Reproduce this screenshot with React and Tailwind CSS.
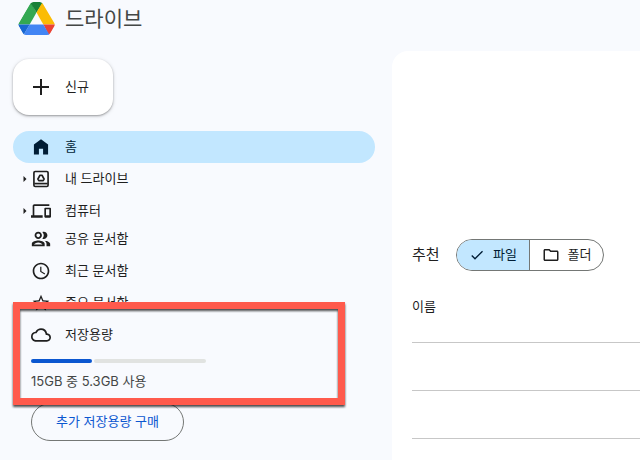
import { useState } from "react";
import {
  MdOutlineDevices,
  MdAccessTime,
  MdStarOutline,
  MdOutlineCloud,
  MdOutlineFolder,
  MdCheck,
} from "react-icons/md";

function DriveLogo() {
  return (
    <svg viewBox="0 0 87.3 78" className="h-[33px] w-[37px] shrink-0" aria-hidden="true">
      <clipPath id="drive-shape">
        <path d="M32 1.5Q34.500 0 37 0H50.500Q53.500 0 56 1.500Q58 3 59.300 5.200L85.900 50.200Q88 53.500 86 57L76.500 73.500Q74 78 69 78H18.500Q13.500 78 11 73.500L1.300 57Q-.6 53.500 1.300 50L28.500 4.800Q30 2.600 32 1.500Z" />
      </clipPath>
      <g clipPath="url(#drive-shape)">
        <path d="M0 53 30 0 43.650 25 27.500 53Z" fill="#34a853" />
        <path d="M28 0H60L43.650 25Z" fill="#188038" />
        <path d="M58 0 90 53H59.800L43.650 25Z" fill="#fbbc04" />
        <path d="M59.800 53H90L73.500 80Z" fill="#ea4335" />
        <path d="M27.500 53H59.800L74.500 78H13Z" fill="#4285f4" />
        <path d="M0 53H27.500L13 78Z" fill="#1967d2" />
      </g>
    </svg>
  );
}

function HomeIcon() {
  return (
    <svg viewBox="0 0 24 24" fill="currentColor" className="size-5" aria-hidden="true">
      <path d="M3.500 21V9L12 2.600 20.500 9V21H14.500V14H9.500V21Z" />
    </svg>
  );
}

function MyDriveIcon() {
  return (
    <svg viewBox="0 0 24 24" fill="none" stroke="currentColor" strokeWidth="2" className="size-5" aria-hidden="true">
      <rect x="3.500" y="3" width="17" height="18" rx="1.500" />
      <path d="M4 17.500H20" />
      <path d="M10.800 7.500H13.200L15.700 12 14.600 14H9.400L8.300 12Z" strokeLinejoin="round" />
    </svg>
  );
}

function PeopleIcon() {
  return (
    <svg viewBox="0 0 24 24" fill="currentColor" className="size-5" aria-hidden="true">
      <path
        d="M9 13.750c-2.340 0-7 1.170-7 3.500V20h14v-2.750c0-2.330-4.660-3.500-7-3.500zM4.340 18c.3-.9 2.600-2.250 4.660-2.250S13.360 17.100 13.660 18H4.340zM9 12c2.210 0 4-1.790 4-4s-1.790-4-4-4-4 1.790-4 4 1.790 4 4 4zm0-6c1.100 0 2 .9 2 2s-.9 2-2 2-2-.9-2-2 .9-2 2-2zm7.040 7.810c1.160.84 1.960 1.960 1.960 3.440V20h4v-2.750c0-2.020-3.500-3.170-5.960-3.440zM15 12c2.210 0 4-1.790 4-4s-1.790-4-4-4c-.54 0-1.040.11-1.500.3.630.89 1.500 2.100 1.500 3.700s-.87 2.810-1.500 3.700c.46.190.96.300 1.500.300z"
        transform="translate(-1.200 -1.200) scale(1.100)"
      />
    </svg>
  );
}

function NavItem({ icon, label, active, expandable }) {
  return (
    <li>
      <a
        href="#"
        aria-current={active ? "page" : undefined}
        className={`flex h-8 items-center rounded-full ${active ? "bg-[#c2e7ff] text-[#001d35]" : "text-[#1f1f1f]"}`}
      >
        <span className="flex w-[18px] shrink-0 justify-end pr-1">
          {expandable && (
            <svg viewBox="0 0 4 6" fill="currentColor" className="h-1.5 w-1" aria-hidden="true">
              <path d="M.5 0 3.500 3 .5 6Z" />
            </svg>
          )}
        </span>
        <span className="mr-3.5 size-5 shrink-0">{icon}</span>
        {label}
      </a>
    </li>
  );
}

function Sidebar() {
  return (
    <aside className="w-[392px] shrink-0 pt-2 pr-[17px] pl-[13px]">
      <button
        type="button"
        className="flex h-14 items-center rounded-2xl bg-white pr-6 pl-[18px] shadow-[0_1px_2px_rgba(0,0,0,0.3),0_1px_4px_rgba(0,0,0,0.15)]"
      >
        <svg viewBox="0 0 20 20" stroke="currentColor" strokeWidth="2" className="mr-3.5 size-5" aria-hidden="true">
          <path d="M2 10H18M10 2V18" />
        </svg>
        신규
      </button>

      <nav className="mt-4 h-[180px] overflow-hidden">
        <ul>
          <NavItem active icon={<HomeIcon />} label="홈" />
          <NavItem expandable icon={<MyDriveIcon />} label="내 드라이브" />
          <NavItem expandable icon={<MdOutlineDevices className="size-5" />} label="컴퓨터" />
        </ul>
        <ul className="-mt-1">
          <NavItem icon={<PeopleIcon />} label="공유 문서함" />
          <NavItem icon={<MdAccessTime className="size-5" />} label="최근 문서함" />
          <NavItem icon={<MdStarOutline className="size-5" />} label="중요 문서함" />
        </ul>
      </nav>

      <section className="relative pt-2 pl-[18px]">
        <div className="absolute -top-[9px] left-0 h-[103px] w-[332px] border-[7px] border-[#ff5a4c] drop-shadow-[0_2px_1px_rgba(0,0,0,0.7)]" />
        <a href="#" className="flex h-8 items-center">
          <MdOutlineCloud className="mr-3.5 size-5" />
          저장용량
        </a>
        <div
          role="progressbar"
          aria-label="저장용량"
          aria-valuemin={0}
          aria-valuemax={15}
          aria-valuenow={5.3}
          className="mt-2 flex h-1 w-[175px] gap-0.5"
        >
          <span className="w-[35%] rounded-full bg-[#0b57d0]" />
          <span className="flex-1 rounded-full bg-[#e1e3e1]" />
        </div>
        <p className="mt-2 leading-5 text-[#444746]">15GB 중 5.3GB 사용</p>
        <button
          type="button"
          className="mt-3 h-[38px] rounded-full border border-[#747775] px-6 text-[#0b57d0]"
        >
          추가 저장용량 구매
        </button>
      </section>
    </aside>
  );
}

function Suggestions() {
  const [view, setView] = useState("file");
  const chip = "flex w-[73px] items-center justify-center gap-2";
  return (
    <main className="min-w-0 flex-1 rounded-tl-2xl bg-white pt-[188px] pl-5">
      <div className="flex h-8 items-center gap-4">
        <h2 className="w-7 text-[15px] whitespace-nowrap">추천</h2>
        <div className="flex h-8 overflow-hidden rounded-full border border-[#747775]">
          <button
            type="button"
            aria-pressed={view === "file"}
            onClick={() => setView("file")}
            className={`${chip} border-r border-[#747775] ${view === "file" ? "bg-[#c2e7ff] text-[#001d35]" : ""}`}
          >
            <MdCheck className="size-4" />
            파일
          </button>
          <button
            type="button"
            aria-pressed={view === "folder"}
            onClick={() => setView("folder")}
            className={`${chip} ${view === "folder" ? "bg-[#c2e7ff] text-[#001d35]" : ""}`}
          >
            <MdOutlineFolder className="size-[18px]" />
            폴더
          </button>
        </div>
      </div>
      <table className="w-full border-collapse">
        <thead>
          <tr className="h-[71px] border-b border-[#c7c7c7]">
            <th scope="col" className="text-left font-normal">이름</th>
          </tr>
        </thead>
        <tbody>
          <tr className="h-12 border-b border-[#c7c7c7]"><td /></tr>
          <tr className="h-12 border-b border-[#c7c7c7]"><td /></tr>
        </tbody>
      </table>
    </main>
  );
}

export default function App() {
  return (
    <div className="flex min-h-screen flex-col bg-[#f8fafe] font-[Inter,'Noto_Sans_CJK_KR',sans-serif] text-[13px] text-[#1f1f1f]">
      <header className="flex h-[51px] items-start gap-2.5 pt-0.5 pl-[18px]">
        <DriveLogo />
        <h1 className="text-[21px] leading-[34px] text-[#444746]">드라이브</h1>
      </header>
      <div className="flex flex-1">
        <Sidebar />
        <Suggestions />
      </div>
    </div>
  );
}
